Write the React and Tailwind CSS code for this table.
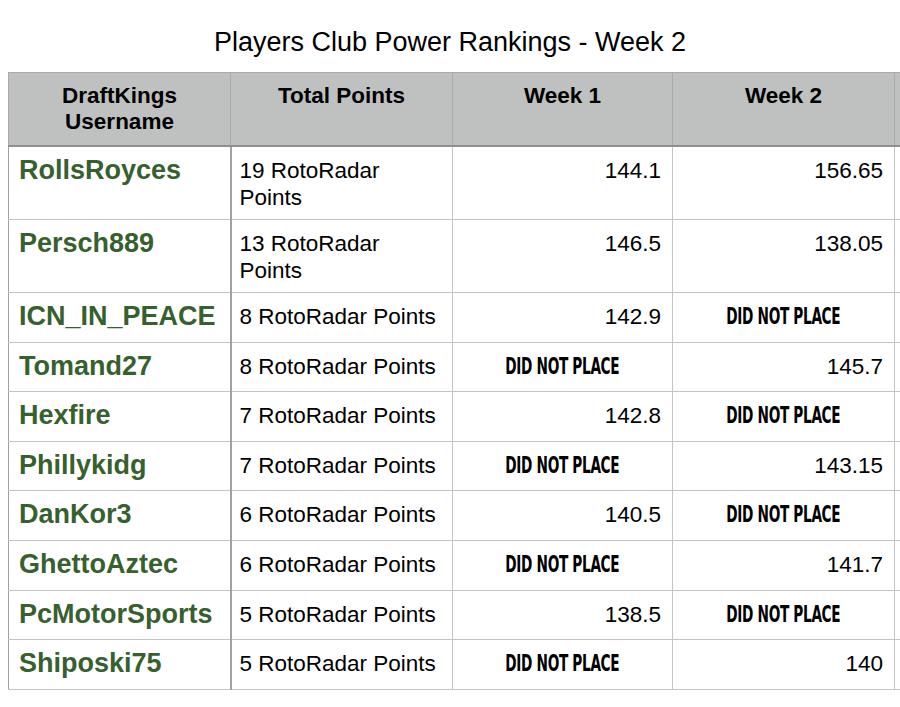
import React from "react";

const ROWS = [
  { name: "RollsRoyces", points: "19 RotoRadar Points", w1: "144.1", w2: "156.65", tall: true },
  { name: "Persch889", points: "13 RotoRadar Points", w1: "146.5", w2: "138.05", tall: true },
  { name: "ICN_IN_PEACE", points: "8 RotoRadar Points", w1: "142.9", w2: null },
  { name: "Tomand27", points: "8 RotoRadar Points", w1: null, w2: "145.7" },
  { name: "Hexfire", points: "7 RotoRadar Points", w1: "142.8", w2: null },
  { name: "Phillykidg", points: "7 RotoRadar Points", w1: null, w2: "143.15" },
  { name: "DanKor3", points: "6 RotoRadar Points", w1: "140.5", w2: null },
  { name: "GhettoAztec", points: "6 RotoRadar Points", w1: null, w2: "141.7" },
  { name: "PcMotorSports", points: "5 RotoRadar Points", w1: "138.5", w2: null },
  { name: "Shiposki75", points: "5 RotoRadar Points", w1: null, w2: "140" },
];

const DidNotPlace = () => (
  <span className="inline-block origin-center scale-x-[0.66] font-['Impact','Liberation_Sans_Narrow','DejaVu_Sans_Condensed',sans-serif] text-[23px] font-bold tracking-[-0.5px] text-black">
    DID NOT PLACE
  </span>
);

const WeekCell = ({ value }) => (
  <td className="border border-[#c4c4c4] px-[11px] pt-[10px] align-top">
    {value ? (
      <div className="text-right leading-[27px]">{value}</div>
    ) : (
      <div className="text-center leading-[27px]">
        <DidNotPlace />
      </div>
    )}
  </td>
);

const headCell =
  "border border-b-2 border-[#a9aba9] border-b-[#8e8f8e] px-2 pt-[10px] align-top text-[22.5px] font-bold leading-[26px]";

export default function App() {
  return (
    <div className="h-[707px] w-[900px] overflow-hidden bg-white font-['Liberation_Sans',Arial,sans-serif] text-black">
      <h1 className="pt-[27px] pb-[15px] text-center text-[27px] leading-[30px]">
        Players Club Power Rankings - Week 2
      </h1>
      <div className="pl-[8px]">
        <table className="w-[1110px] table-fixed border-collapse text-[22.5px]">
          <colgroup>
            <col className="w-[222px]" />
            <col className="w-[222px]" />
            <col className="w-[220px]" />
            <col className="w-[222px]" />
            <col className="w-[224px]" />
          </colgroup>
          <thead>
            <tr className="h-[73px] bg-[#bfc1c0]">
              <th className={headCell}>
                DraftKings
                <br />
                Username
              </th>
              <th className={headCell}>Total Points</th>
              <th className={headCell}>Week 1</th>
              <th className={headCell}>Week 2</th>
              <th className={headCell}></th>
            </tr>
          </thead>
          <tbody>
            {ROWS.map((row, i) => (
              <tr key={row.name} className={row.tall ? (i === 0 ? "h-[74px]" : "h-[73px]") : "h-[49.6px]"}>
                <td className="border border-[#c4c4c4] border-l-[#a0a0a0] border-r-2 border-r-[#a2a2a2] px-[10px] pt-[10px] align-top text-[27px] font-bold leading-[27px] text-[#37602f]">
                  {row.name}
                </td>
                <td className="border border-[#c4c4c4] px-[8px] pt-[10px] align-top leading-[27px]">
                  {row.tall ? (
                    <>
                      {row.points.replace(" Points", "")}
                      <br />
                      Points
                    </>
                  ) : (
                    row.points
                  )}
                </td>
                <WeekCell value={row.w1} />
                <WeekCell value={row.w2} />
                <td className="border border-[#c4c4c4]"></td>
              </tr>
            ))}
          </tbody>
        </table>
      </div>
    </div>
  );
}
